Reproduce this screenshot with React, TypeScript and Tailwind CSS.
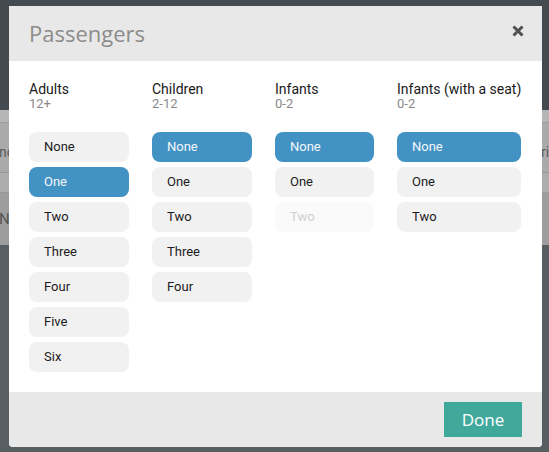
import React from "react";

type Opt = { label: string; state: "on" | "off" | "dis" };

const columns: { title: string; sub: string; w: string; opts: Opt[] }[] = [
  {
    title: "Adults",
    sub: "12+",
    w: "w-[100px]",
    opts: [
      { label: "None", state: "off" },
      { label: "One", state: "on" },
      { label: "Two", state: "off" },
      { label: "Three", state: "off" },
      { label: "Four", state: "off" },
      { label: "Five", state: "off" },
      { label: "Six", state: "off" },
    ],
  },
  {
    title: "Children",
    sub: "2-12",
    w: "w-[100px]",
    opts: [
      { label: "None", state: "on" },
      { label: "One", state: "off" },
      { label: "Two", state: "off" },
      { label: "Three", state: "off" },
      { label: "Four", state: "off" },
    ],
  },
  {
    title: "Infants",
    sub: "0-2",
    w: "w-[99px]",
    opts: [
      { label: "None", state: "on" },
      { label: "One", state: "off" },
      { label: "Two", state: "dis" },
    ],
  },
  {
    title: "Infants (with a seat)",
    sub: "0-2",
    w: "w-[124px]",
    opts: [
      { label: "None", state: "on" },
      { label: "One", state: "off" },
      { label: "Two", state: "off" },
    ],
  },
];

function OptButton({ o }: { o: Opt }) {
  const cls =
    o.state === "on"
      ? "bg-[#4392c4] text-[#f4f8fb]"
      : o.state === "dis"
      ? "bg-[#fafafa] text-[#cfcfcf]"
      : "bg-[#f1f1f1] text-[#1c1c1c]";
  return (
    <div
      className={`h-[30px] rounded-[8px] pl-[15px] pb-[2px] flex items-center text-[13px] leading-none ${cls}`}
    >
      {o.label}
    </div>
  );
}

export default function App() {
  return (
    <div
      className="relative w-[549px] h-[452px] overflow-hidden bg-[#575f62]"
      style={{ fontFamily: "Roboto, 'Liberation Sans', sans-serif" }}
    >
      {/* page behind the overlay */}
      <div className="h-[110px] bg-[#444b50]" />
      <div className="h-[13px] bg-[#b6b6b6] border-b border-[#9c9c9c]" />
      <div className="h-[50px] bg-[#aaaaaa] border-b border-[#969696] flex items-center pt-[10px] text-[14px] text-[#5a5a5a]">
        <span className="-ml-[1px]">nce</span>
        <span className="ml-auto -mr-[15px]">Price</span>
      </div>
      <div className="h-[20px] bg-[#adadad] border-b border-[#989898]" />
      <div className="h-[52px] bg-[#9d9d9d] flex items-center text-[15px] text-[#555]">
        <span className="-ml-[1px]">No</span>
      </div>

      {/* modal */}
      <div className="absolute left-[9px] top-[6px] w-[533px] h-[441px] bg-white rounded-b-[4px] flex flex-col overflow-hidden">
        <div className="h-[55px] bg-[#e8e8e8] flex items-center justify-between pl-[20px] pr-[18px]">
          <span
            className="text-[22px] text-[#8c8c8c] leading-none -mt-[2px]"
            style={{ fontFamily: "'Open Sans', sans-serif" }}
          >
            Passengers
          </span>
          <svg width="12" height="12" viewBox="0 0 12 12" className="-mt-[5px]">
            <path
              d="M1.5 1.5 L10.5 10.5 M10.5 1.5 L1.5 10.5"
              stroke="#505050"
              strokeWidth="3"
              strokeLinecap="butt"
            />
          </svg>
        </div>

        <div className="flex-1 flex gap-[23px] pl-[20px] pt-[20px]">
          {columns.map((c) => (
            <div key={c.title} className={`flex flex-col ${c.w}`}>
              <div className="text-[14px] leading-[16px] text-[#1a1a1a] whitespace-nowrap">
                {c.title}
              </div>
              <div className="text-[13px] leading-[14px] text-[#8a8a8a]">{c.sub}</div>
              <div className="mt-[21px] flex flex-col gap-[5px]">
                {c.opts.map((o) => (
                  <OptButton key={o.label} o={o} />
                ))}
              </div>
            </div>
          ))}
        </div>

        <div className="h-[55px] bg-[#e8e8e8] flex items-center justify-end pr-[20px]">
          <div
            className="w-[78px] h-[35px] bg-[#41a99c] text-white text-[17px] flex items-center justify-center"
            style={{ fontFamily: "'Open Sans', sans-serif" }}
          >
            Done
          </div>
        </div>
      </div>
    </div>
  );
}
